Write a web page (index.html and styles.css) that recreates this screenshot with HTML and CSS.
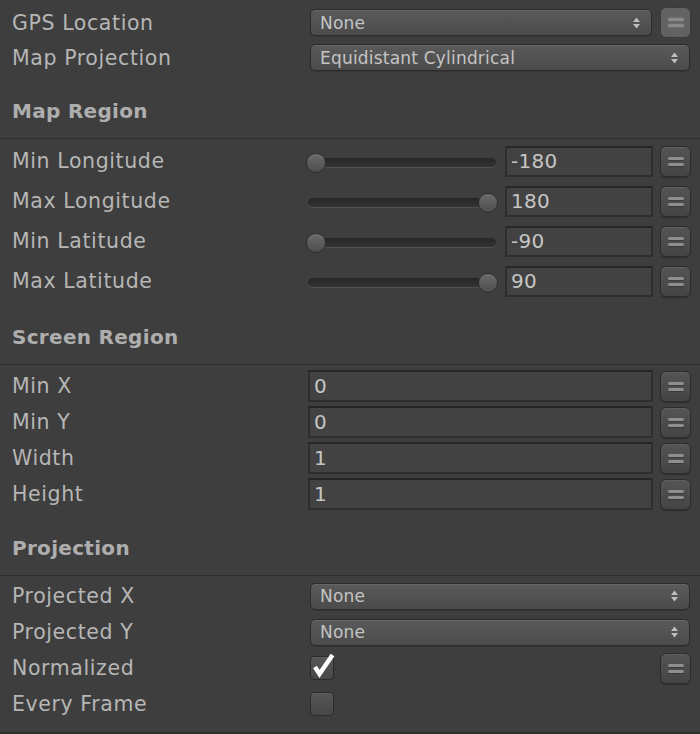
FILE: index.html
```html
<!DOCTYPE html>
<html>
<head>
<meta charset="utf-8">
<link rel="stylesheet" href="styles.css">
</head>
<body>
<div class="inspector">
  <div class="group top">
    <div class="row r35">
      <span class="label">GPS Location</span>
      <div class="ctrl gap8">
        <div class="popup">None<svg class="arrows" width="7" height="12" viewBox="0 0 7 12"><path d="M0 5 L3.5 0.5 L7 5 Z M0 7 L7 7 L3.5 11.5 Z"/></svg></div>
        <div class="menu hl"><i></i><i></i></div>
      </div>
    </div>
    <div class="row r35">
      <span class="label">Map Projection</span>
      <div class="ctrl">
        <div class="popup wide">Equidistant Cylindrical<svg class="arrows" width="7" height="12" viewBox="0 0 7 12"><path d="M0 5 L3.5 0.5 L7 5 Z M0 7 L7 7 L3.5 11.5 Z"/></svg></div>
      </div>
    </div>
  </div>

  <div class="section-head">Map Region</div>
  <div class="group sliders">
    <div class="row r40">
      <span class="label">Min Longitude</span>
      <div class="ctrl">
        <div class="slider"><div class="track"></div><div class="knob min"></div></div>
        <div class="field short">-180</div>
        <div class="menu"><i></i><i></i></div>
      </div>
    </div>
    <div class="row r40">
      <span class="label">Max Longitude</span>
      <div class="ctrl">
        <div class="slider"><div class="track"></div><div class="knob max"></div></div>
        <div class="field short">180</div>
        <div class="menu"><i></i><i></i></div>
      </div>
    </div>
    <div class="row r40">
      <span class="label">Min Latitude</span>
      <div class="ctrl">
        <div class="slider"><div class="track"></div><div class="knob min"></div></div>
        <div class="field short">-90</div>
        <div class="menu"><i></i><i></i></div>
      </div>
    </div>
    <div class="row r40">
      <span class="label">Max Latitude</span>
      <div class="ctrl">
        <div class="slider"><div class="track"></div><div class="knob max"></div></div>
        <div class="field short">90</div>
        <div class="menu"><i></i><i></i></div>
      </div>
    </div>
  </div>

  <div class="section-head">Screen Region</div>
  <div class="group screen">
    <div class="row r36">
      <span class="label">Min X</span>
      <div class="ctrl">
        <div class="field long">0</div>
        <div class="menu"><i></i><i></i></div>
      </div>
    </div>
    <div class="row r36">
      <span class="label">Min Y</span>
      <div class="ctrl">
        <div class="field long">0</div>
        <div class="menu"><i></i><i></i></div>
      </div>
    </div>
    <div class="row r36">
      <span class="label">Width</span>
      <div class="ctrl">
        <div class="field long">1</div>
        <div class="menu"><i></i><i></i></div>
      </div>
    </div>
    <div class="row r36">
      <span class="label">Height</span>
      <div class="ctrl">
        <div class="field long">1</div>
        <div class="menu"><i></i><i></i></div>
      </div>
    </div>
  </div>

  <div class="section-head">Projection</div>
  <div class="group proj">
    <div class="row r36">
      <span class="label">Projected X</span>
      <div class="ctrl">
        <div class="popup wide">None<svg class="arrows" width="7" height="12" viewBox="0 0 7 12"><path d="M0 5 L3.5 0.5 L7 5 Z M0 7 L7 7 L3.5 11.5 Z"/></svg></div>
      </div>
    </div>
    <div class="row r36">
      <span class="label">Projected Y</span>
      <div class="ctrl">
        <div class="popup wide">None<svg class="arrows" width="7" height="12" viewBox="0 0 7 12"><path d="M0 5 L3.5 0.5 L7 5 Z M0 7 L7 7 L3.5 11.5 Z"/></svg></div>
      </div>
    </div>
    <div class="row r36">
      <span class="label">Normalized</span>
      <div class="ctrl between">
        <div class="check"><svg width="24" height="24" viewBox="0 0 24 24"><polyline points="5,11 9.5,18 22.5,-1" fill="none" stroke="#ffffff" stroke-width="4.5" stroke-linejoin="miter"/></svg></div>
        <div class="menu"><i></i><i></i></div>
      </div>
    </div>
    <div class="row r36">
      <span class="label">Every Frame</span>
      <div class="ctrl between">
        <div class="check"></div>
      </div>
    </div>
  </div>
</div>
</body>
</html>
```

FILE: styles.css
```css
html, body {
  margin: 0;
  padding: 0;
}
body {
  background: #3e3e3e;
  width: 700px;
  height: 734px;
  overflow: hidden;
  font-family: "DejaVu Sans", "Liberation Sans", sans-serif;
  color: #b4b4b4;
}
.inspector {
  width: 700px;
  height: 734px;
  box-sizing: border-box;
}
.group.top { padding-top: 5px; }
.group.sliders { padding-top: 2px; }
.group.screen { padding-top: 3px; }
.group.proj {
  padding-top: 2px;
  padding-bottom: 10px;
  border-bottom: 2px solid #2e2e2e;
}
.row {
  display: flex;
  align-items: center;
}
.r35 { height: 35px; }
.r40 { height: 40px; }
.r36 { height: 36px; }
.label {
  width: 296px;
  margin-left: 12px;
  font-size: 20.5px;
  line-height: 24px;
  letter-spacing: 0.6px;
  color: #b6b6b6;
  white-space: nowrap;
}
.ctrl {
  width: 383px;
  display: flex;
  align-items: center;
  gap: 7px;
}
.ctrl.gap8 { gap: 8px; }
.ctrl.between { justify-content: space-between; }
.section-head {
  height: 64px;
  box-sizing: border-box;
  display: flex;
  align-items: flex-end;
  padding: 0 0 16px 12px;
  border-bottom: 1px solid #2f2f2f;
  font-weight: bold;
  font-size: 20px;
  line-height: 22px;
  letter-spacing: 0.3px;
  color: #aeaeae;
}
.popup {
  flex: 1;
  height: 27px;
  box-sizing: border-box;
  margin-left: 2px;
  border: 1px solid #2b2b2b;
  border-radius: 5px;
  background: linear-gradient(#5a5a5a, #4b4b4b);
  box-shadow: inset 0 1px 0 #666666, 0 1px 0 #353535;
  display: flex;
  align-items: center;
  justify-content: space-between;
  padding: 0 11px 0 9px;
  font-size: 17px;
  letter-spacing: 0.2px;
  color: #c4c4c4;
}
.popup.wide { margin-right: 1px; }
.arrows { fill: #bdbdbd; }
.menu {
  width: 31px;
  height: 31px;
  flex: none;
  box-sizing: border-box;
  border: 1px solid #2c2c2c;
  border-radius: 6px;
  background: linear-gradient(#555555, #444444);
  box-shadow: inset 0 1px 0 #5f5f5f, 0 1px 1px rgba(0,0,0,0.3);
  display: flex;
  flex-direction: column;
  align-items: center;
  justify-content: center;
  gap: 3px;
}
.menu i {
  display: block;
  width: 16px;
  height: 3px;
  border-radius: 1.5px;
  background: #8f8f8f;
  box-shadow: 0 1px 1px rgba(0,0,0,0.25);
}
.menu.hl {
  background: #626262;
  border-color: #3a3a3a;
  box-shadow: none;
}
.menu.hl i {
  width: 16px;
  height: 3px;
  background: #8a8a8a;
  box-shadow: 0 0 2px #8a8a8a;
}
.slider {
  width: 188px;
  height: 30px;
  position: relative;
  display: flex;
  align-items: center;
  margin-right: 2px;
  flex: none;
}
.track {
  width: 188px;
  height: 9px;
  margin-top: 3px;
  border-radius: 5px;
  background: linear-gradient(#272727, #343434);
  box-shadow: 0 1px 0 #4f4f4f;
}
.knob {
  position: absolute;
  top: 7px;
  width: 20px;
  height: 20px;
  box-sizing: border-box;
  border-radius: 50%;
  border: 1px solid #2d2d2d;
  background: linear-gradient(#6a6a6a, #4e4e4e);
  box-shadow: inset 0 1px 0 #777777;
}
.knob.min { left: -2px; }
.knob.max { left: 170px; }
.field {
  height: 31px;
  box-sizing: border-box;
  border: 2px solid #2e2e2e;
  border-top-color: #262626;
  background: #424242;
  display: flex;
  align-items: center;
  padding-left: 4px;
  font-size: 20px;
  letter-spacing: 0.3px;
  color: #c6c6c6;
}
.field.short { width: 148px; }
.field.long { width: 345px; height: 32px; }
.check {
  width: 24px;
  height: 24px;
  box-sizing: border-box;
  margin-left: 2px;
  border: 1px solid #2b2b2b;
  border-radius: 4px;
  background: linear-gradient(#575757, #474747);
  box-shadow: inset 0 1px 0 #606060;
}
.check svg {
  display: block;
  margin: -1px 0 0 -1px;
  overflow: visible;
}
```
